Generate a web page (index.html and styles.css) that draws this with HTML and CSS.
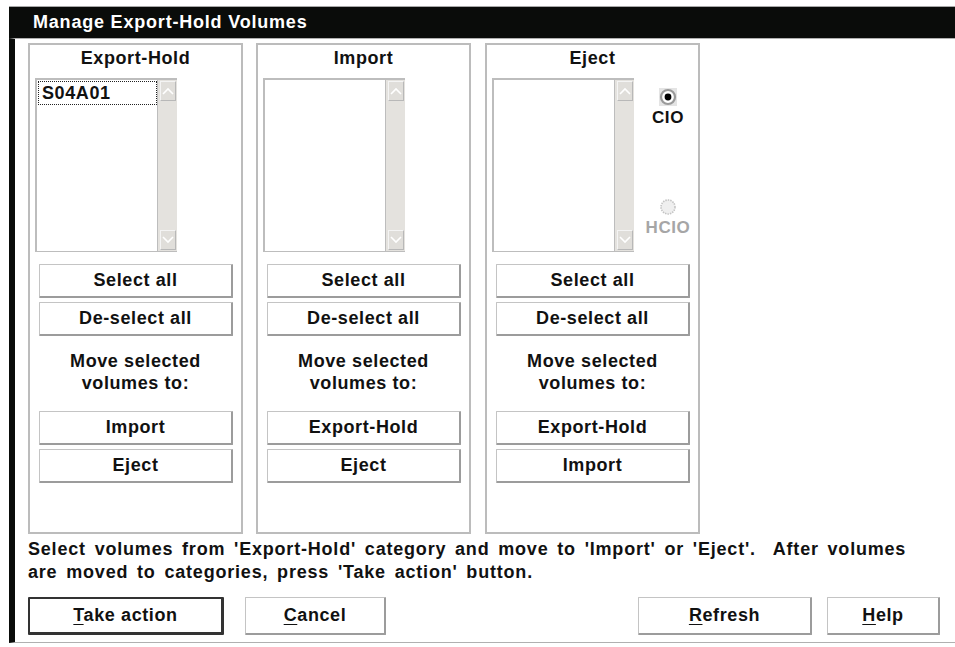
FILE: index.html
```html
<!DOCTYPE html>
<html lang="en">
<head>
  <meta charset="UTF-8" />
  <title>Manage Export-Hold Volumes</title>
  <link rel="stylesheet" href="styles.css">
</head>
<body>
  <div class="window">
    <div class="titlebar">Manage Export-Hold Volumes</div>
    <div class="client">
      <div class="panels">

        <div class="panel">
          <div class="panel-title">Export-Hold</div>
          <div class="list-row">
            <div class="listbox">
              <div class="items">
                <div class="item focused">S04A01</div>
              </div>
              <div class="scrollbar">
                <div class="arrow up"><svg width="12" height="8" viewBox="0 0 12 8"><path d="M1 7 L6 2 L11 7" fill="none" stroke="#fff" stroke-width="1.6"/></svg></div>
                <div class="arrow down"><svg width="12" height="8" viewBox="0 0 12 8"><path d="M1 1 L6 6 L11 1" fill="none" stroke="#fff" stroke-width="1.6"/></svg></div>
              </div>
            </div>
          </div>
          <button class="btn first">Select all</button>
          <button class="btn">De-select all</button>
          <p class="move">Move selected<br>volumes to:</p>
          <button class="btn">Import</button>
          <button class="btn">Eject</button>
        </div>

        <div class="panel">
          <div class="panel-title">Import</div>
          <div class="list-row">
            <div class="listbox">
              <div class="items"></div>
              <div class="scrollbar">
                <div class="arrow up"><svg width="12" height="8" viewBox="0 0 12 8"><path d="M1 7 L6 2 L11 7" fill="none" stroke="#fff" stroke-width="1.6"/></svg></div>
                <div class="arrow down"><svg width="12" height="8" viewBox="0 0 12 8"><path d="M1 1 L6 6 L11 1" fill="none" stroke="#fff" stroke-width="1.6"/></svg></div>
              </div>
            </div>
          </div>
          <button class="btn first">Select all</button>
          <button class="btn">De-select all</button>
          <p class="move">Move selected<br>volumes to:</p>
          <button class="btn">Export-Hold</button>
          <button class="btn">Eject</button>
        </div>

        <div class="panel third">
          <div class="panel-title">Eject</div>
          <div class="list-row">
            <div class="listbox">
              <div class="items"></div>
              <div class="scrollbar">
                <div class="arrow up"><svg width="12" height="8" viewBox="0 0 12 8"><path d="M1 7 L6 2 L11 7" fill="none" stroke="#fff" stroke-width="1.6"/></svg></div>
                <div class="arrow down"><svg width="12" height="8" viewBox="0 0 12 8"><path d="M1 1 L6 6 L11 1" fill="none" stroke="#fff" stroke-width="1.6"/></svg></div>
              </div>
            </div>
            <div class="radios">
              <div class="radio">
                <svg width="18" height="18" viewBox="0 0 18 18">
                  <rect x="0" y="0" width="18" height="18" fill="#e4e4e4"/>
                  <circle cx="9" cy="9" r="7" fill="#fff" stroke="#9a9a9a" stroke-width="2.2"/>
                  <circle cx="9" cy="9" r="3.4" fill="#000"/>
                </svg>
                <span>CIO</span>
              </div>
              <div class="radio disabled">
                <svg width="18" height="18" viewBox="0 0 18 18">
                  <circle cx="9" cy="9" r="7" fill="#efefef" stroke="#c4c4c4" stroke-width="1.6" stroke-dasharray="1.5 1"/>
                </svg>
                <span>HCIO</span>
              </div>
            </div>
          </div>
          <button class="btn first">Select all</button>
          <button class="btn">De-select all</button>
          <p class="move">Move selected<br>volumes to:</p>
          <button class="btn">Export-Hold</button>
          <button class="btn">Import</button>
        </div>

      </div>

      <p class="hint">Select volumes from 'Export-Hold' category and move to 'Import' or 'Eject'.&nbsp; After volumes<br>are moved to categories, press 'Take action' button.</p>

      <div class="actions">
        <button class="btn big default"><u>T</u>ake action</button>
        <button class="btn big cancel"><u>C</u>ancel</button>
        <div class="spacer"></div>
        <button class="btn big refresh"><u>R</u>efresh</button>
        <button class="btn big help"><u>H</u>elp</button>
      </div>
    </div>
  </div>
</body>
</html>
```

FILE: styles.css
```css
body {
  margin: 0;
  background: #fff;
  font-family: "Liberation Sans", Arial, sans-serif;
  font-weight: bold;
  font-size: 18px;
  letter-spacing: 0.6px;
  color: #111;
}
.window {
  margin: 6px 0 0 9px;
  border-top: 1px solid #a8a8a8;
}
.titlebar {
  background: #0a0c0a;
  color: #fff;
  height: 31px;
  line-height: 30px;
  padding-left: 24px;
  font-size: 18px;
  letter-spacing: 0.8px;
}
.client {
  border-left: 6px solid #0a0c0a;
  border-top: 1px solid #b0b0b0;
  border-bottom: 1px solid #b0b0b0;
  height: 605px;
  box-sizing: border-box;
  padding: 4px 0 0 13px;
}
.panels {
  display: flex;
  gap: 13px;
}
.panel {
  width: 215px;
  height: 491px;
  box-sizing: border-box;
  border: 2px solid #bcbcbc;
  display: flex;
  flex-direction: column;
  align-items: flex-start;
}
.panel.third {
  margin-left: 1px;
}
.panel-title {
  align-self: stretch;
  text-align: center;
  height: 33px;
  line-height: 26px;
}
.list-row {
  display: flex;
  margin-left: 5px;
}
.listbox {
  display: flex;
  width: 142px;
  height: 174px;
  border-top: 2px solid #bdbdbd;
  border-left: 2px solid #bdbdbd;
  border-bottom: 1px solid #bdbdbd;
  box-sizing: border-box;
}
.items {
  flex: 1;
  padding: 1px 0 0 1px;
  border-right: 1px solid #bdbdbd;
}
.item {
  height: 22px;
  line-height: 23px;
  padding-left: 3px;
}
.item.focused {
  border: 1px dotted #222;
}
.scrollbar {
  width: 19px;
  background: #e4e2de;
  display: flex;
  flex-direction: column;
  justify-content: space-between;
}
.arrow {
  height: 18px;
  margin: 1px 1px 1px 2px;
  background: #e0deda;
  border-top: 1px solid #f4f4f4;
  border-left: 1px solid #f4f4f4;
  border-bottom: 1px solid #b8b8b8;
  border-right: 1px solid #b8b8b8;
  display: flex;
  align-items: center;
  justify-content: center;
}
.radios {
  margin-left: 13px;
  width: 42px;
  display: flex;
  flex-direction: column;
  align-items: center;
}
.radio {
  display: flex;
  flex-direction: column;
  align-items: center;
}
.radio svg {
  margin-top: 10px;
}
.radio span {
  line-height: 24px;
  font-size: 17px;
}
.radio.disabled {
  margin-top: 58px;
}
.radio.disabled span {
  color: #a6a6a6;
}
.btn {
  font-family: "Liberation Sans", Arial, sans-serif;
  font-weight: bold;
  font-size: 18px;
  letter-spacing: 0.6px;
  color: #111;
  background: #fff;
  width: 194px;
  height: 34px;
  margin: 4px 0 0 9px;
  padding: 0;
  border-top: 1px solid #c4c4c4;
  border-left: 1px solid #c4c4c4;
  border-right: 2px solid #9c9c9c;
  border-bottom: 2px solid #9c9c9c;
  border-radius: 1px;
}
.btn.first {
  margin-top: 12px;
}
.btn u {
  text-underline-offset: 3px;
}
.move {
  align-self: stretch;
  text-align: center;
  margin: 14px 0 13px;
  line-height: 22px;
}
.hint {
  margin: 4px 0 0;
  line-height: 23px;
  letter-spacing: 0.8px;
  word-spacing: 3px;
}
.actions {
  display: flex;
  margin-top: 13px;
  padding-right: 15px;
}
.btn.big {
  height: 38px;
  margin: 0;
}
.btn.default {
  width: 196px;
  border: 2px solid #333;
  border-right: 3px solid #333;
  border-bottom: 3px solid #333;
}
.btn.cancel {
  width: 141px;
  margin-left: 21px;
}
.spacer {
  flex: 1;
}
.btn.refresh {
  width: 174px;
}
.btn.help {
  width: 113px;
  margin-left: 15px;
}
```
